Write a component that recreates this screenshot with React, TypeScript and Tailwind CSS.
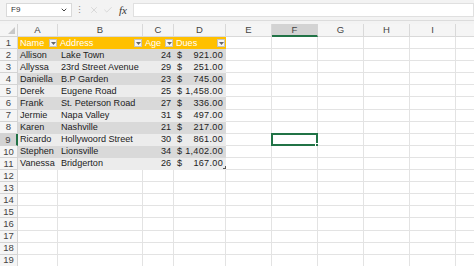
import React from 'react';
import { ChevronDown, X, Check } from 'lucide-react';

const colWidths = [40, 85, 31, 52, 46, 46, 46, 46, 46, 46];
const letters = ['A', 'B', 'C', 'D', 'E', 'F', 'G', 'H', 'I', ''];

const rows = [
  ['Allison', 'Lake Town', '24', '921.00'],
  ['Allyssa', '23rd Street Avenue', '29', '251.00'],
  ['Daniella', 'B.P Garden', '23', '745.00'],
  ['Derek', 'Eugene Road', '25', '1,458.00'],
  ['Frank', 'St. Peterson Road', '27', '336.00'],
  ['Jermie', 'Napa Valley', '31', '497.00'],
  ['Karen', 'Nashville', '21', '217.00'],
  ['Ricardo', 'Hollywoord Street', '30', '861.00'],
  ['Stephen', 'Lionsville', '34', '1,402.00'],
  ['Vanessa', 'Bridgerton', '26', '167.00'],
];

const FilterButton = () => (
  <span className="absolute right-[1px] top-[2px] flex h-[8px] w-[8px] items-center justify-center border border-[#c4c4c4] bg-[#f6f6f6]">
    <svg width="5" height="3" viewBox="0 0 5 3">
      <path d="M0 0h5L2.5 3z" fill="#666" />
    </svg>
  </span>
);

const FormulaBar = () => (
  <div className="flex h-[21px] items-center border-b border-[#dcdcdc] bg-[#f3f3f3]">
    <div className="ml-[6px] flex h-[14px] w-[66px] items-center justify-between border border-[#d9d9d9] bg-white pl-[4px] pr-[3px]">
      <span className="text-[8px] text-[#333]">F9</span>
      <ChevronDown size={8} strokeWidth={3} color="#444" />
    </div>
    <span className="ml-[3px] text-[9px] leading-none text-[#888]">⋮</span>
    <div className="ml-[5px] flex items-center gap-[4px]">
      <X size={10} strokeWidth={1.5} color="#c9c9c9" />
      <Check size={10} strokeWidth={1.5} color="#c9c9c9" />
      <span className="ml-[2px] font-['Liberation_Serif',serif] text-[11px] italic text-[#333]">fx</span>
    </div>
    <div className="ml-[6px] h-[14px] flex-1 border border-[#e0e0e0] bg-white" />
  </div>
);

const ColumnHeaders = () => (
  <div className="flex h-[13px] bg-[#f5f5f5]">
    <div className="relative w-[18px] shrink-0 border-r border-b border-[#d4d4d4]">
      <svg className="absolute bottom-[2px] right-[2px]" width="7" height="7" viewBox="0 0 7 7">
        <path d="M7 0v7H0z" fill="#c8c8c8" />
      </svg>
    </div>
    {letters.map((l, i) =>
      l === 'F' ? (
        <div
          key={i}
          style={{ width: colWidths[i] }}
          className="flex shrink-0 items-center justify-center border-r border-b-2 border-r-[#d4d4d4] border-b-[#217346] bg-[#d3d3d3] text-[9.5px] text-[#444]"
        >
          {l}
        </div>
      ) : (
        <div
          key={i}
          style={{ width: colWidths[i] }}
          className="flex shrink-0 items-center justify-center border-r border-b border-[#d9d9d9] text-[9.5px] text-[#444]"
        >
          {l}
        </div>
      )
    )}
  </div>
);

const RowNum = ({ n }: { n: number }) =>
  n === 9 ? (
    <div className="flex w-[18px] shrink-0 items-center justify-center border-r-2 border-b border-r-[#217346] border-b-[#d4d4d4] bg-[#d3d3d3] text-[9.5px] text-[#444]">
      {n}
    </div>
  ) : (
    <div className="flex w-[18px] shrink-0 items-center justify-center border-r border-b border-[#d4d4d4] bg-[#f5f5f5] text-[9.5px] text-[#444]">
      {n}
    </div>
  );

const EmptyCells = ({ from, row }: { from: number; row: number }) => (
  <>
    {colWidths.slice(from).map((w, j) => {
      const col = from + j;
      return (
        <div key={col} style={{ width: w }} className="relative shrink-0 border-r border-b border-[#e3e3e3]">
          {col === 5 && row === 9 && (
            <div className="absolute -left-[1px] -top-[1px] h-[13px] w-[47px] border-2 border-[#217346]">
              <span className="absolute -bottom-[3px] -right-[3px] h-[4px] w-[4px] border border-white bg-[#217346]" />
            </div>
          )}
        </div>
      );
    })}
  </>
);

export default function App() {
  return (
    <div className="h-[266px] w-[474px] overflow-hidden bg-white font-['Liberation_Sans',Arial,sans-serif] leading-none">
      <FormulaBar />
      <div className="h-[3px] bg-[#f3f3f3]" />
      <ColumnHeaders />
      {/* table header row */}
      <div className="flex h-[12.1px]">
        <RowNum n={1} />
        <div className="flex w-[208px] shrink-0 bg-[#ffc000] text-[9.1px] text-white">
          {['Name', 'Address', 'Age', 'Dues'].map((h, i) => (
            <div key={h} style={{ width: colWidths[i] }} className="relative flex shrink-0 items-center pl-[2px]">
              {h}
              <FilterButton />
            </div>
          ))}
        </div>
        <EmptyCells from={4} row={1} />
      </div>
      {rows.map((r, idx) => {
        const n = idx + 2;
        const band = idx % 2 === 0 ? 'bg-[#d9d9d9]' : 'bg-[#ececec]';
        return (
          <div key={n} className="flex h-[12.1px]">
            <RowNum n={n} />
            <div className={`flex w-[208px] shrink-0 text-[9.1px] text-[#222] ${band}`}>
              <div className="flex w-[40px] shrink-0 items-center pl-[2px] whitespace-nowrap">{r[0]}</div>
              <div className="flex w-[85px] shrink-0 items-center pl-[3px] whitespace-nowrap">{r[1]}</div>
              <div className="flex w-[31px] shrink-0 items-center justify-end pr-[3px]">{r[2]}</div>
              <div className="relative flex w-[52px] shrink-0 items-center justify-between pl-[3px] pr-[3px]">
                <span>$</span>
                <span className="tracking-[0.3px]">{r[3]}</span>
                {n === 11 && (
                  <span className="absolute bottom-[1px] right-[0px] h-[3px] w-[3px] border-r border-b border-[#555]" />
                )}
              </div>
            </div>
            <EmptyCells from={4} row={n} />
          </div>
        );
      })}
      {Array.from({ length: 8 }, (_, k) => k + 12).map((n) => (
        <div key={n} className="flex h-[12.1px]">
          <RowNum n={n} />
          <EmptyCells from={0} row={n} />
        </div>
      ))}
    </div>
  );
}
